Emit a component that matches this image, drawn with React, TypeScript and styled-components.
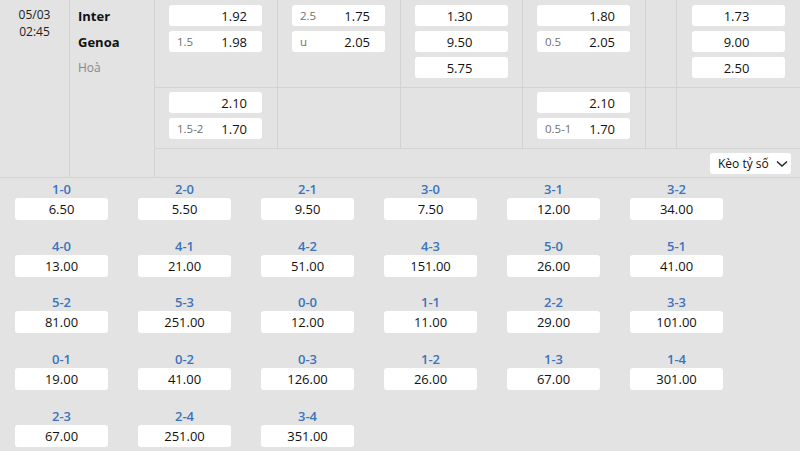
import React from "react";
import styled, { createGlobalStyle } from "styled-components";

const Global = createGlobalStyle`
  html, body { margin: 0; padding: 0; background: #e3e3e3; }
  body { font-family: "Open Sans", "Noto Sans", sans-serif; color: #111; }
  * { box-sizing: border-box; }
`;

const Page = styled.div`
  width: 800px;
  height: 451px;
  background: #e3e3e3;
  overflow: hidden;
`;

const Top = styled.div`
  display: flex;
  height: 178px;
  border-bottom: 1px solid #d3d3d3;
`;

const TimeCol = styled.div`
  width: 70px;
  border-right: 1px solid #d3d3d3;
  display: flex;
  flex-direction: column;
  align-items: center;
  padding-top: 6px;
  font-size: 12px;
  line-height: 17px;
  color: #222;
`;

const TeamCol = styled.div`
  width: 85px;
  border-right: 1px solid #d3d3d3;
  display: flex;
  flex-direction: column;
  padding: 5px 0 0 8px;
`;

const Team = styled.div<{ $muted?: boolean }>`
  height: 26px;
  line-height: 22px;
  font-size: ${(p) => (p.$muted ? "12px" : "13px")};
  font-weight: ${(p) => (p.$muted ? 400 : 700)};
  color: ${(p) => (p.$muted ? "#888" : "#111")};
`;

const Right = styled.div`
  flex: 1;
  display: flex;
  flex-direction: column;
`;

const OddsRow = styled.div<{ $h: number }>`
  display: grid;
  grid-template-columns: 123px 123px 122px 123px 31px 123px;
  height: ${(p) => p.$h}px;
  border-bottom: 1px solid #d3d3d3;
`;

const Cell = styled.div<{ $pt: number; $last?: boolean }>`
  display: flex;
  flex-direction: column;
  align-items: center;
  gap: 5px;
  padding-top: ${(p) => p.$pt}px;
  padding-right: 1px;
  border-right: ${(p) => (p.$last ? "none" : "1px solid #d3d3d3")};
`;

const OddBox = styled.div<{ $center?: boolean }>`
  width: 93px;
  height: 21px;
  background: #fff;
  border-radius: 3px;
  display: flex;
  align-items: center;
  justify-content: ${(p) => (p.$center ? "center" : "space-between")};
  padding: ${(p) => (p.$center ? "0 3px 0 0" : "0 15px 0 8px")};
  font-size: 13px;
`;

const Hcap = styled.span`
  font-size: 11.5px;
  color: #6f6f6f;
`;

const Val = styled.span`
  font-size: 13px;
  color: #111;
`;

const DropBar = styled.div`
  flex: 1;
  display: flex;
  justify-content: flex-end;
  align-items: flex-start;
  padding: 4px 9px 0 0;
`;

const Dropdown = styled.div`
  width: 81px;
  height: 21px;
  background: #fff;
  border-radius: 3px;
  display: flex;
  align-items: center;
  gap: 7px;
  padding-left: 8px;
  font-size: 12px;
  color: #111;
`;

const ScoreGrid = styled.div`
  display: grid;
  grid-template-columns: repeat(6, 123px);
  row-gap: 16.7px;
  padding-top: 2px;
`;

const ScoreCell = styled.div`
  display: flex;
  flex-direction: column;
  align-items: center;
`;

const ScoreLabel = styled.div`
  height: 18px;
  line-height: 18px;
  font-size: 13px;
  font-weight: 600;
  color: #3b74ba;
`;

const ScoreBox = styled.div`
  width: 93px;
  height: 22px;
  background: #fff;
  border-radius: 3px;
  display: flex;
  align-items: center;
  justify-content: center;
  font-size: 13px;
  color: #111;
`;

type O = { h?: string; v: string; c?: boolean };

const row1: O[][] = [
  [{ h: "", v: "1.92" }, { h: "1.5", v: "1.98" }],
  [{ h: "2.5", v: "1.75" }, { h: "u", v: "2.05" }],
  [{ v: "1.30", c: true }, { v: "9.50", c: true }, { v: "5.75", c: true }],
  [{ h: "", v: "1.80" }, { h: "0.5", v: "2.05" }],
  [],
  [{ v: "1.73", c: true }, { v: "9.00", c: true }, { v: "2.50", c: true }],
];

const row2: O[][] = [
  [{ h: "", v: "2.10" }, { h: "1.5-2", v: "1.70" }],
  [],
  [],
  [{ h: "", v: "2.10" }, { h: "0.5-1", v: "1.70" }],
  [],
  [],
];

const scores: [string, string][] = [
  ["1-0", "6.50"], ["2-0", "5.50"], ["2-1", "9.50"], ["3-0", "7.50"], ["3-1", "12.00"], ["3-2", "34.00"],
  ["4-0", "13.00"], ["4-1", "21.00"], ["4-2", "51.00"], ["4-3", "151.00"], ["5-0", "26.00"], ["5-1", "41.00"],
  ["5-2", "81.00"], ["5-3", "251.00"], ["0-0", "12.00"], ["1-1", "11.00"], ["2-2", "29.00"], ["3-3", "101.00"],
  ["0-1", "19.00"], ["0-2", "41.00"], ["0-3", "126.00"], ["1-2", "26.00"], ["1-3", "67.00"], ["1-4", "301.00"],
  ["2-3", "67.00"], ["2-4", "251.00"], ["3-4", "351.00"],
];

const renderRow = (cols: O[][], pt: number) =>
  cols.map((col, i) => (
    <Cell key={i} $pt={pt} $last={i === cols.length - 1}>
      {col.map((o, j) => (
        <OddBox key={j} $center={o.c}>
          {o.c ? (
            <Val>{o.v}</Val>
          ) : (
            <>
              <Hcap>{o.h}</Hcap>
              <Val>{o.v}</Val>
            </>
          )}
        </OddBox>
      ))}
    </Cell>
  ));

export default function App() {
  return (
    <Page>
      <Global />
      <Top>
        <TimeCol>
          <div>05/03</div>
          <div>02:45</div>
        </TimeCol>
        <TeamCol>
          <Team>Inter</Team>
          <Team>Genoa</Team>
          <Team $muted>Hoà</Team>
        </TeamCol>
        <Right>
          <OddsRow $h={88}>{renderRow(row1, 5)}</OddsRow>
          <OddsRow $h={61}>{renderRow(row2, 4)}</OddsRow>
          <DropBar>
            <Dropdown>
              <span>Kèo tỷ số</span>
              <svg width="12" height="8" viewBox="0 0 12 8" fill="none">
                <path d="M1 1.5 L6 6 L11 1.5" stroke="#222" strokeWidth="1.4" />
              </svg>
            </Dropdown>
          </DropBar>
        </Right>
      </Top>
      <ScoreGrid>
        {scores.map(([s, v]) => (
          <ScoreCell key={s}>
            <ScoreLabel>{s}</ScoreLabel>
            <ScoreBox>{v}</ScoreBox>
          </ScoreCell>
        ))}
      </ScoreGrid>
    </Page>
  );
}
